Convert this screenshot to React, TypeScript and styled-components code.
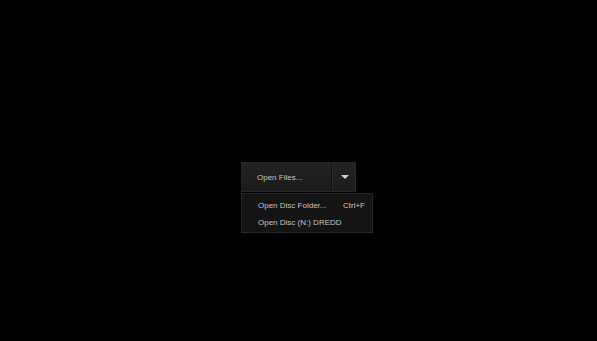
import React from 'react';
import styled, { createGlobalStyle } from 'styled-components';

const GlobalStyle = createGlobalStyle`
  html, body {
    margin: 0;
    padding: 0;
    background: #000;
  }
  body {
    font-family: "Liberation Sans", Arial, sans-serif;
  }
`;

const Page = styled.div`
  width: 597px;
  height: 341px;
  background: #000;
  display: flex;
  flex-direction: column;
  align-items: flex-start;
  padding: 162px 0 0 241px;
  box-sizing: border-box;
`;

const SplitButton = styled.div`
  display: flex;
  height: 30px;
  box-sizing: border-box;
  border: 1px solid #262626;
  background: linear-gradient(#232323, #1b1b1b);
`;

const MainPart = styled.div`
  width: 90px;
  display: flex;
  align-items: center;
  padding-left: 15px;
  box-sizing: border-box;
  font-size: 8px;
  color: #c4c4c4;
  border-right: 1px solid #111;
`;

const ArrowPart = styled.div`
  width: 22px;
  display: flex;
  align-items: center;
  justify-content: center;
  border-left: 1px solid #2a2a2a;
`;

const Triangle = styled.div`
  width: 0;
  height: 0;
  border-left: 4px solid transparent;
  border-right: 4px solid transparent;
  border-top: 4px solid #d0d0d0;
  margin-left: 1px;
`;

const Menu = styled.div`
  margin-top: 1px;
  width: 132px;
  box-sizing: border-box;
  padding: 3px 0 1px;
  background: #141414;
  border: 1px solid #262626;
`;

const Item = styled.div`
  height: 17px;
  display: flex;
  align-items: center;
  justify-content: space-between;
  padding: 0 7px 0 16px;
  font-size: 8px;
  color: #c4c4c4;
`;

const Shortcut = styled.span`
  color: #c4c4c4;
`;

export default function App() {
  return (
    <>
      <GlobalStyle />
      <Page>
        <SplitButton>
          <MainPart>Open Files...</MainPart>
          <ArrowPart>
            <Triangle />
          </ArrowPart>
        </SplitButton>
        <Menu>
          <Item>
            <span>Open Disc Folder...</span>
            <Shortcut>Ctrl+F</Shortcut>
          </Item>
          <Item>
            <span>Open Disc (N:) DREDD</span>
          </Item>
        </Menu>
      </Page>
    </>
  );
}
